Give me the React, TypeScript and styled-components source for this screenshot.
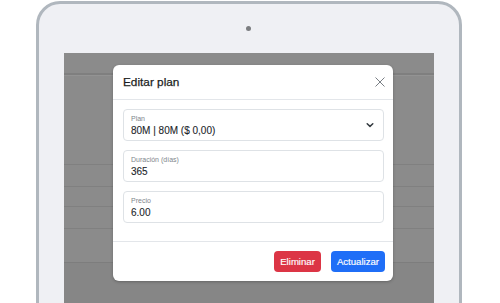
import React from 'react';
import styled, {createGlobalStyle} from "styled-components";

const GlobalStyle = createGlobalStyle`
    html, body {
        margin: 0;
        padding: 0;
        background: #ffffff;
        overflow: hidden;
    }
    body {
        font-family: "Liberation Sans", Arial, sans-serif;
        color: #212529;
    }
`

type FieldProps = {
    label: string;
    value: string;
    select?: boolean;
}

const Field = ({label, value, select}: FieldProps) => {
    return (
        <FieldBox>
            <FieldText>
                <FieldLabel>{label}</FieldLabel>
                <FieldValue>{value}</FieldValue>
            </FieldText>
            {select && (
                <svg width="8" height="6" viewBox="0 0 8 6">
                    <path d="M1.2 1.8 L4 4.4 L6.8 1.8" fill="none" stroke="#343a40" strokeWidth="1.5"
                          strokeLinecap="round" strokeLinejoin="round"/>
                </svg>
            )}
        </FieldBox>
    )
}

export default function App() {
    return (
        <Page>
            <GlobalStyle/>
            <Device>
                <Camera/>
                <Screen>
                    <TopBar/>
                    <TableBlock height={89}/>
                    <TableBlock height={21}/>
                    <TableBlock height={19}/>
                    <TableBlock height={21}/>
                    <TableBlock height={33} last/>
                    <BelowTable/>

                    <Modal>
                        <ModalHeader>
                            <ModalTitle>Editar plan</ModalTitle>
                            <svg width="10" height="10" viewBox="0 0 10 10">
                                <path d="M0.5 0.5 L9.5 9.5 M9.5 0.5 L0.5 9.5" stroke="#7a7f85" strokeWidth="1"/>
                            </svg>
                        </ModalHeader>
                        <ModalBody>
                            <Field label="Plan" value="80M | 80M ($ 0,00)" select/>
                            <Field label="Duración (días)" value="365"/>
                            <Field label="Precio" value="6.00"/>
                        </ModalBody>
                        <ModalFooter>
                            <Button variant="danger">Eliminar</Button>
                            <Button variant="primary">Actualizar</Button>
                        </ModalFooter>
                    </Modal>
                </Screen>
            </Device>
        </Page>
    );
}

const Page = styled.div`
    width: 500px;
    height: 303px;
    padding: 1px 0 0 36px;
    box-sizing: border-box;
    overflow: hidden;
`

const Device = styled.div`
    width: 426px;
    height: 360px;
    box-sizing: border-box;
    border: 3px solid #b0b7be;
    border-radius: 24px;
    background: #eff0f4;
    display: flex;
    flex-direction: column;
    align-items: center;
    padding: 22px 25px 0;
`

const Camera = styled.div`
    width: 5px;
    height: 5px;
    border-radius: 50%;
    background: #7b7d80;
    margin-bottom: 22px;
    margin-left: -2px;
`

const Screen = styled.div`
    position: relative;
    align-self: stretch;
    height: 270px;
    background: #8b8b8b;
    display: flex;
    flex-direction: column;
`

const TopBar = styled.div`
    height: 20px;
    border-bottom: 2px solid #7f7f7f;
    box-shadow: 0 1px 0 #939393;
`

const TableBlock = styled.div<{ height: number, last?: boolean }>`
    height: ${p => p.height}px;
    border-bottom: 1px solid ${p => p.last ? '#7d7d7d' : '#808080'};
`

const BelowTable = styled.div`
    flex: 1;
    background: #868686;
`

const Modal = styled.div`
    position: absolute;
    left: 49px;
    top: 12px;
    width: 280px;
    background: #ffffff;
    border-radius: 6px;
    box-shadow: 0 1px 3px rgba(0, 0, 0, 0.25);
    display: flex;
    flex-direction: column;
`

const ModalHeader = styled.div`
    height: 35px;
    box-sizing: border-box;
    padding: 0 8px 0 10px;
    display: flex;
    align-items: center;
    justify-content: space-between;
    border-bottom: 1px solid #e3e6ea;
`

const ModalTitle = styled.h5`
    margin: 0;
    font-size: 11.8px;
    font-weight: 400;
    color: #1b1e21;
    -webkit-text-stroke: 0.25px #1b1e21;
`

const ModalBody = styled.div`
    padding: 9px 9px 18px 10px;
    display: flex;
    flex-direction: column;
    gap: 9px;
`

const FieldBox = styled.div`
    height: 32px;
    box-sizing: border-box;
    border: 1px solid #dee2e6;
    border-radius: 4px;
    padding: 0 9px 0 7px;
    display: flex;
    align-items: center;
    justify-content: space-between;
`

const FieldText = styled.div`
    display: flex;
    flex-direction: column;
    padding-top: 2px;
`

const FieldLabel = styled.span`
    font-size: 7px;
    line-height: 9px;
    color: #80868c;
`

const FieldValue = styled.span`
    font-size: 10px;
    line-height: 15px;
    color: #212529;
    -webkit-text-stroke: 0.1px #212529;
`

const ModalFooter = styled.div`
    height: 40px;
    box-sizing: border-box;
    border-top: 1px solid #e3e6ea;
    padding: 0 8px;
    display: flex;
    align-items: center;
    justify-content: flex-end;
    gap: 10px;
`

const Button = styled.button<{ variant: 'danger' | 'primary' }>`
    height: 21px;
    padding: 0 6px;
    border: none;
    border-radius: 4px;
    font-family: "Liberation Sans", Arial, sans-serif;
    font-size: 9.6px;
    color: #ffffff;
    -webkit-text-stroke: 0.15px #ffffff;
    background: ${p => p.variant === 'danger' ? '#dc3545' : '#1f6ef7'};
`
